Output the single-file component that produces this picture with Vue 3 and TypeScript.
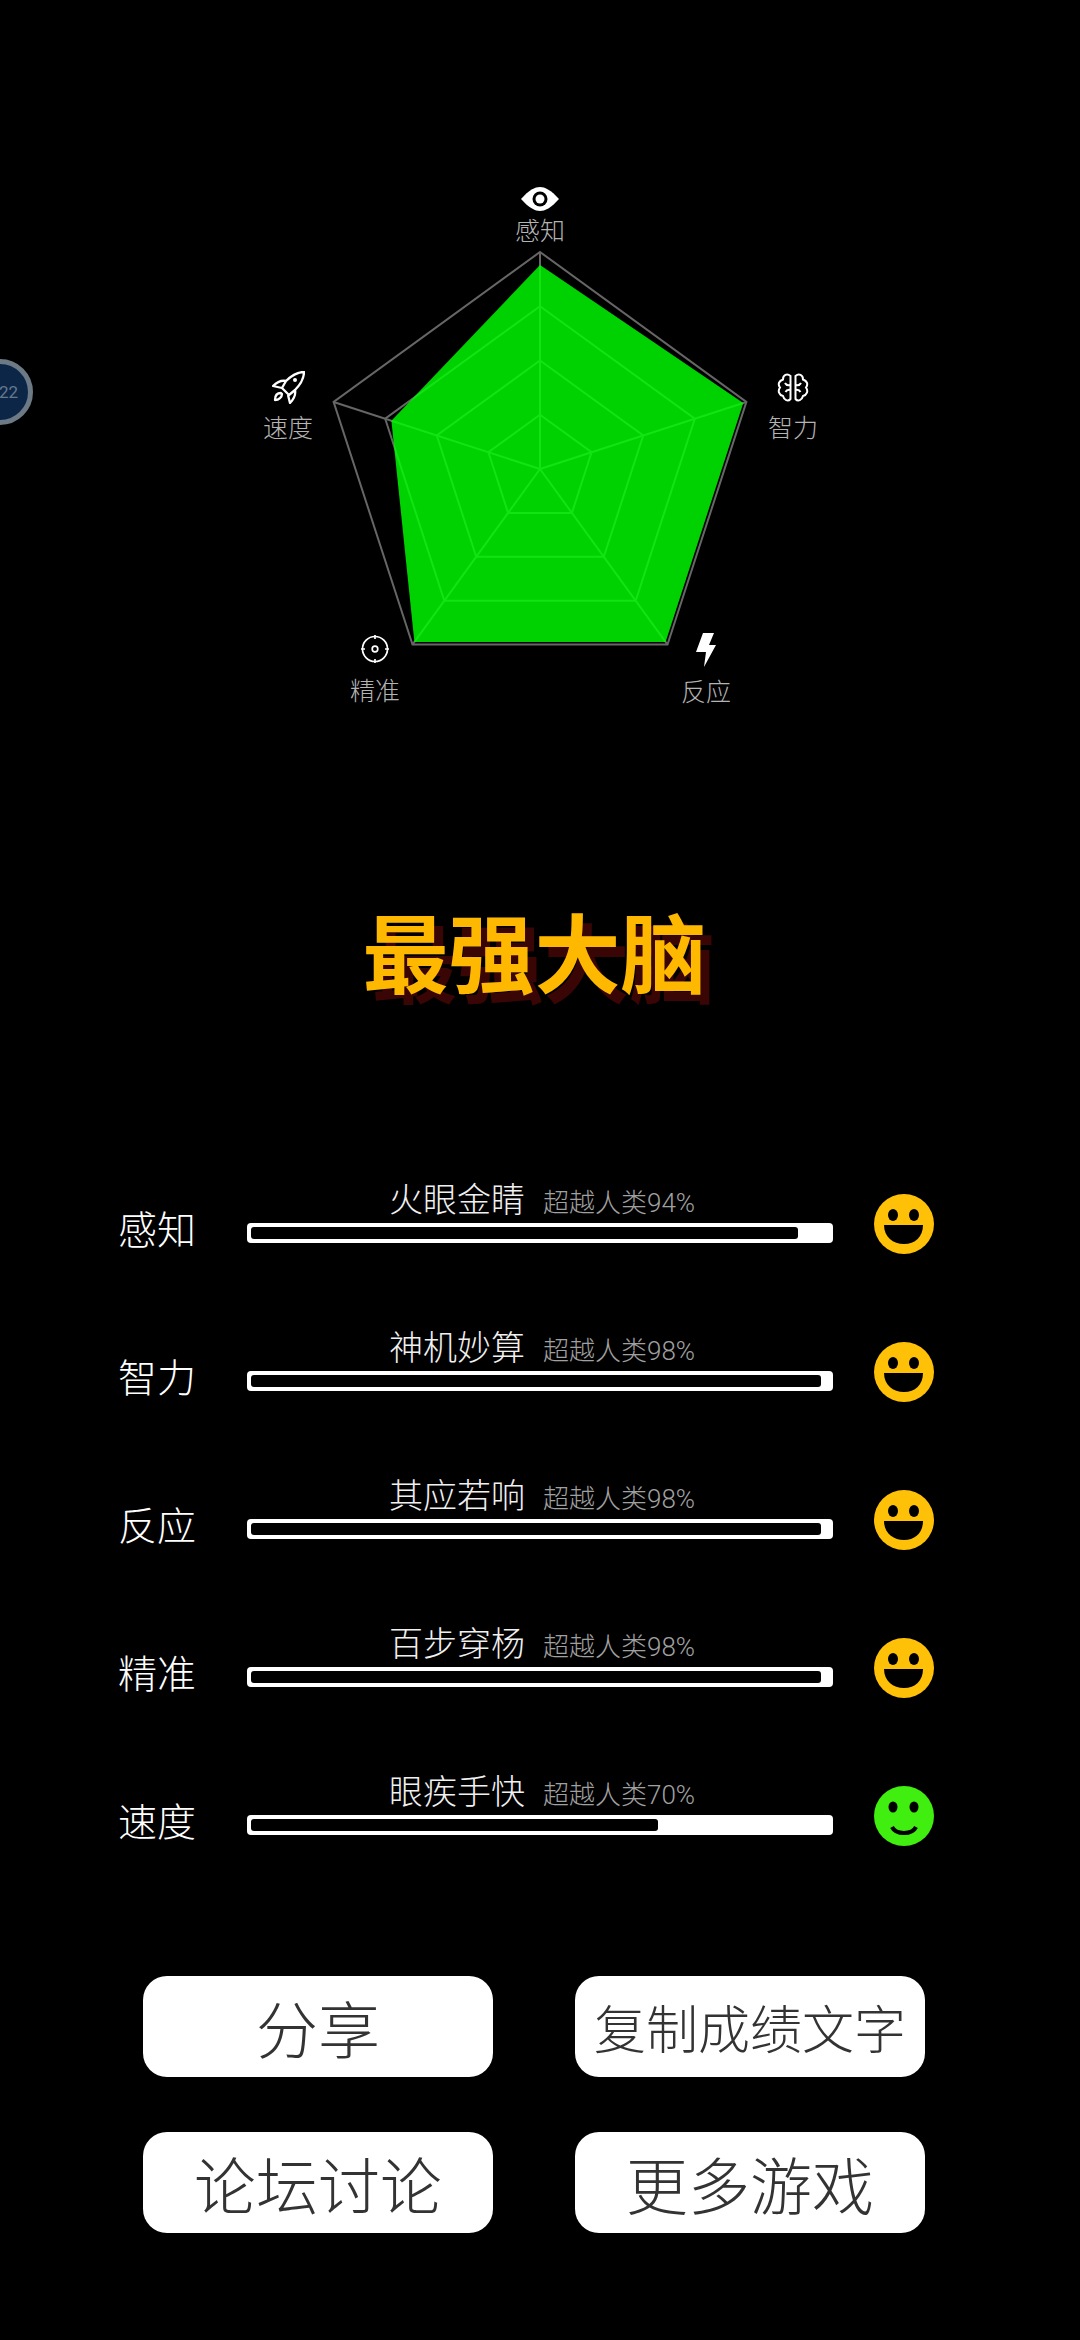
<script setup lang="ts">
interface Node { name: string; icon: string; x: number; top: number; gap: number }
interface Row { label: string; title: string; pct: number; mood: 'great' | 'good' }

const CX = 540
const CY = 469
const R = 217

const values = [0.94, 0.985, 0.985, 0.985, 0.72]

function vertex(i: number, k: number): [number, number] {
  const a = (-90 + i * 72) * Math.PI / 180
  return [CX + Math.cos(a) * R * k, CY + Math.sin(a) * R * k]
}
function ring(k: number): string {
  return [0, 1, 2, 3, 4].map(i => vertex(i, k).map(n => n.toFixed(1)).join(',')).join(' ')
}

const rings = [0.25, 0.5, 0.75, 1].map(ring)
const spokes = [0, 1, 2, 3, 4].map(i => vertex(i, 1))
const area = values.map((v, i) => vertex(i, v).map(n => n.toFixed(1)).join(',')).join(' ')

const nodes: Node[] = [
  { name: '感知', icon: 'eye', x: 540, top: 187, gap: 9 },
  { name: '智力', icon: 'brain', x: 793, top: 373, gap: 15 },
  { name: '反应', icon: 'bolt', x: 706, top: 632, gap: 14 },
  { name: '精准', icon: 'target', x: 375, top: 635, gap: 17 },
  { name: '速度', icon: 'rocket', x: 288, top: 371, gap: 13 }
]

const rows: Row[] = [
  { label: '感知', title: '火眼金睛', pct: 94, mood: 'great' },
  { label: '智力', title: '神机妙算', pct: 98, mood: 'great' },
  { label: '反应', title: '其应若响', pct: 98, mood: 'great' },
  { label: '精准', title: '百步穿杨', pct: 98, mood: 'great' },
  { label: '速度', title: '眼疾手快', pct: 70, mood: 'good' }
]

const buttons = [
  { text: '分享', small: false },
  { text: '复制成绩文字', small: true },
  { text: '论坛讨论', small: false },
  { text: '更多游戏', small: false }
]
</script>

<template>
  <div class="page">
    <div class="floater"><span>22</span></div>

    <section class="radar">
      <svg class="radar-svg" width="1080" height="905" viewBox="0 0 1080 905">
        <polygon v-for="(p, i) in rings" :key="'r' + i" :points="p" fill="none" stroke="#666" stroke-width="2" />
        <line v-for="(p, i) in spokes" :key="i" :x1="CX" :y1="CY" :x2="p[0]" :y2="p[1]" stroke="#666" stroke-width="2" />
        <polygon :points="area" fill="#00ff00" fill-opacity="0.82" />
      </svg>

      <div
        v-for="n in nodes"
        :key="n.name"
        class="node"
        :style="{ left: n.x + 'px', top: n.top + 'px', gap: n.gap + 'px' }"
      >
        <svg v-if="n.icon === 'eye'" width="38" height="24" viewBox="0 0 38 24">
          <path d="M0 12C8 3 14 0 19 0s11 3 19 12c-8 9-14 12-19 12S8 21 0 12Z" fill="#fff" />
          <circle cx="19" cy="12" r="7.5" fill="#000" />
          <circle cx="19" cy="12" r="4.5" fill="#fff" />
        </svg>
        <svg v-else-if="n.icon === 'brain'" width="32" height="29" viewBox="0 0 32 29" fill="none" stroke="#fff" stroke-width="2">
          <path d="M13.500 3C10 0 6 2 6 6.500C2 8 0.500 11 3 14.500C0.500 18 2 22 6 23C7 27 11 29 13.500 26Z" />
          <path d="M13.500 12C11 12.500 9 12 8 10M13.500 17C11 16.500 9.500 17 8.500 19" />
          <path d="M18.500 3C22 0 26 2 26 6.500C30 8 31.500 11 29 14.500C31.500 18 30 22 26 23C25 27 21 29 18.500 26Z" />
          <path d="M18.500 12C21 12.500 23 12 24 10M18.500 17C21 16.500 22.500 17 23.500 19" />
        </svg>
        <svg v-else-if="n.icon === 'bolt'" width="20" height="35" viewBox="0 0 20 35">
          <polygon points="7,1 18,1 13,13 20,13 8,35 10,20 0,20" fill="#fff" />
        </svg>
        <svg v-else-if="n.icon === 'target'" width="28" height="28" viewBox="0 0 28 28" fill="none" stroke="#fff" stroke-width="1.700">
          <circle cx="14" cy="14" r="12.500" />
          <circle cx="14" cy="14" r="2.800" />
          <path d="M14 0V4M14 24V28M0 14H4M24 14H28" />
        </svg>
        <svg v-else width="33" height="33" viewBox="0 0 33 33" fill="none" stroke="#fff" stroke-width="2.300" stroke-linejoin="round">
          <path d="M32 1C25 1 19 5 14 10L10 17L17 24L23 19C28 14 32 8 32 1Z" />
          <path d="M14 10C9 9 5 11 1 15L10 17" />
          <path d="M23 19C24 24 22 28 18 32L16 24" />
          <path d="M9 22C5 22 3 25 3 29C7 29 10 26 10 23Z" />
          <circle cx="23" cy="9" r="2" fill="#fff" stroke="none" />
        </svg>
        <span class="node-label">{{ n.name }}</span>
      </div>
    </section>

    <h1 class="title">最强大脑</h1>

    <section class="rows">
      <div v-for="r in rows" :key="r.label" class="row">
        <div class="row-label">{{ r.label }}</div>
        <div class="row-main">
          <div class="row-head">
            <span class="row-title">{{ r.title }}</span>
            <span class="row-pct">超越人类{{ r.pct }}%</span>
          </div>
          <div class="bar">
            <div class="bar-fill" :style="{ width: r.pct + '%' }"></div>
          </div>
        </div>
        <svg class="smile" width="60" height="60" viewBox="0 0 60 60">
          <template v-if="r.mood === 'great'">
            <circle cx="30" cy="30" r="30" fill="#ffc107" />
            <ellipse cx="19" cy="21" rx="5" ry="6" fill="#000" />
            <ellipse cx="40" cy="21" rx="5" ry="6" fill="#000" />
            <path d="M10 31H49C49 43 41 50 30 50S10 43 10 31Z" fill="#000" />
          </template>
          <template v-else>
            <circle cx="30" cy="30" r="30" fill="#40ee10" />
            <ellipse cx="19" cy="21" rx="4.500" ry="5.500" fill="#000" />
            <ellipse cx="40" cy="21" rx="4.500" ry="5.500" fill="#000" />
            <path d="M18 41C22 49 38 49 42 41" fill="none" stroke="#000" stroke-width="4" />
          </template>
        </svg>
      </div>
    </section>

    <section class="buttons">
      <button v-for="b in buttons" :key="b.text" class="btn" :class="{ small: b.small }">{{ b.text }}</button>
    </section>
  </div>
</template>

<style scoped>
.page {
  position: relative;
  width: 1080px;
  height: 2340px;
  overflow: hidden;
  background: #000;
  font-family: "Roboto", "Noto Sans CJK SC", sans-serif;
}
.floater {
  position: absolute;
  left: -33px;
  top: 359px;
  width: 66px;
  height: 66px;
  box-sizing: border-box;
  border: 5px solid #6b7a85;
  border-radius: 50%;
  background: #0c2648;
  display: flex;
  align-items: center;
  justify-content: flex-end;
  padding-right: 10px;
  color: #66788c;
  font-size: 17px;
}
.radar {
  position: relative;
  height: 908px;
}
.radar-svg {
  display: block;
}
.node {
  position: absolute;
  transform: translateX(-50%);
  display: flex;
  flex-direction: column;
  align-items: center;
}
.node svg {
  display: block;
}
.node-label {
  font-size: 25px;
  line-height: 24px;
  font-weight: 300;
  color: #b4b4b4;
  white-space: nowrap;
}
.title {
  margin: 0;
  padding-right: 11px;
  height: 100px;
  text-align: center;
  font-size: 86px;
  line-height: 100px;
  font-weight: 700;
  color: #ffb800;
  text-shadow: 9px 10px 0 #3a0505;
}
.rows {
  margin-top: 175px;
  padding-left: 118px;
}
.row {
  display: flex;
  align-items: flex-start;
  height: 148px;
}
.row-label {
  width: 129px;
  margin-top: 28px;
  font-size: 39px;
  line-height: 40px;
  font-weight: 300;
  color: #fff;
}
.row-main {
  width: 586px;
}
.row-head {
  height: 40px;
  padding-left: 142px;
  display: flex;
  align-items: center;
  gap: 18px;
  color: #f0f0f0;
  white-space: nowrap;
}
.row-title {
  font-size: 34px;
  line-height: 40px;
  font-weight: 300;
  margin-top: -6px;
}
.row-pct {
  font-size: 26px;
  line-height: 40px;
  font-weight: 300;
  color: #a0a0a0;
}
.bar {
  box-sizing: border-box;
  height: 20px;
  padding: 4px 0 4px 4px;
  background: #fff;
  border-radius: 4px;
}
.bar-fill {
  height: 100%;
  background: #000;
  border-radius: 3px;
}
.smile {
  display: block;
  margin-left: 41px;
  margin-top: 11px;
}
.buttons {
  margin-top: 53px;
  padding-left: 143px;
  width: 782px;
  display: grid;
  grid-template-columns: 350px 350px;
  column-gap: 82px;
  row-gap: 55px;
}
.btn {
  height: 101px;
  padding: 0;
  border: 0;
  border-radius: 24px;
  background: #fff;
  font-family: inherit;
  font-size: 62px;
  font-weight: 200;
  color: #333;
  white-space: nowrap;
}
.btn.small {
  font-size: 52px;
}
</style>

<style>
html, body {
  margin: 0;
  background: #000;
}
</style>
